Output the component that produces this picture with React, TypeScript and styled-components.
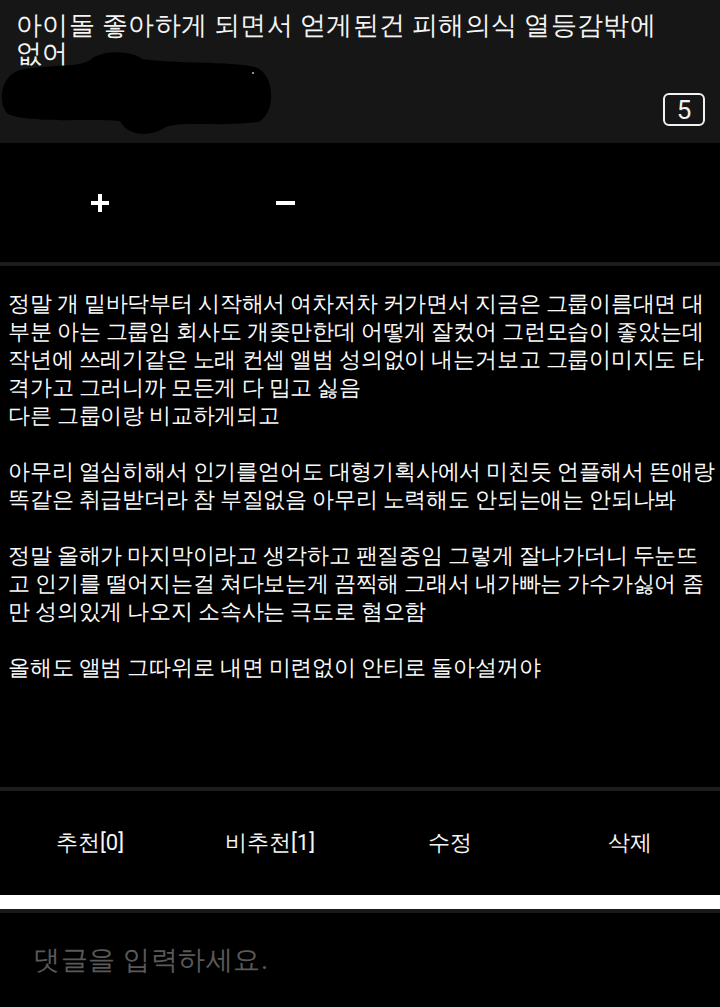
import React from "react";
import styled, { createGlobalStyle } from "styled-components";

const Global = createGlobalStyle`
  html, body { margin: 0; padding: 0; background: #000; }
  body {
    font-family: Roboto, sans-serif;
    color: #fff;
  }
  * { box-sizing: border-box; }
`;

const Page = styled.div`
  width: 720px;
  min-height: 1007px;
  background: #000;
  display: flex;
  flex-direction: column;
  overflow: hidden;
`;

const Header = styled.header`
  position: relative;
  height: 143px;
  background: #161616;
  padding: 11px 15px 0 16px;
  display: flex;
  flex-direction: column;
`;

const Title = styled.h1`
  margin: 0;
  font-family: Roboto, sans-serif;
  font-weight: 400;
  font-size: 26px;
  letter-spacing: 0.35px;
  line-height: 28px;
  color: #f4f4f4;
  white-space: pre;
  position: relative;
  z-index: 0;
`;

const Redaction = styled.svg`
  position: absolute;
  left: 0;
  top: 0;
  z-index: 1;
`;

const MetaRow = styled.div`
  margin-top: 26px;
  display: flex;
  justify-content: flex-end;
`;

const CountBadge = styled.span`
  width: 42px;
  height: 33px;
  border: 2px solid #f2f2f2;
  border-radius: 6px;
  display: flex;
  align-items: center;
  justify-content: center;
  font-size: 26px;
  line-height: 1;
  color: #f2f2f2;
`;

const VoteRow = styled.div`
  height: 119px;
  display: flex;
  align-items: center;
  padding-left: 80px;
  gap: 145px;
`;

const VoteButton = styled.button`
  width: 40px;
  height: 40px;
  background: none;
  border: 0;
  padding: 0;
  display: flex;
  align-items: center;
  justify-content: center;
  cursor: pointer;
`;

const Divider = styled.div<{ $h?: number; $c?: string }>`
  height: ${(p) => p.$h ?? 4}px;
  background: ${(p) => p.$c ?? "#1d1d1d"};
`;

const Body = styled.article`
  height: 521px;
  padding: 24px 0 0 8px;
`;

const Para = styled.p`
  margin: 0 0 28px 0;
  font-family: Roboto, sans-serif;
  font-size: 22px;
  letter-spacing: -0.22px;
  line-height: 28px;
  color: #fafafa;
  white-space: pre;
`;

const ActionBar = styled.nav`
  height: 104px;
  display: grid;
  grid-template-columns: repeat(4, 1fr);
  align-items: center;
`;

const Action = styled.button`
  background: none;
  border: 0;
  color: #f5f5f5;
  font-family: Roboto, sans-serif;
  font-size: 22px;
  padding: 0;
  text-align: center;
`;

const CommentArea = styled.div`
  height: 94px;
  display: flex;
  align-items: center;
  padding-left: 33px;
`;

const CommentInput = styled.input`
  background: transparent;
  border: 0;
  outline: none;
  width: 100%;
  font-family: Roboto, sans-serif;
  font-size: 27px;
  letter-spacing: 0.6px;
  color: #fff;
  padding: 0;
  &::placeholder { color: #595959; }
`;

const paragraphs = [
  [
    "정말 개 밑바닥부터 시작해서 여차저차 커가면서 지금은 그룹이름대면 대",
    "부분 아는 그룹임 회사도 개좆만한데 어떻게 잘컸어 그런모습이 좋았는데",
    "작년에 쓰레기같은 노래 컨셉 앨범 성의없이 내는거보고 그룹이미지도 타",
    "격가고 그러니까 모든게 다 밉고 싫음",
    "다른 그룹이랑 비교하게되고",
  ],
  [
    "아무리 열심히해서 인기를얻어도 대형기획사에서 미친듯 언플해서 뜬애랑",
    "똑같은 취급받더라 참 부질없음 아무리 노력해도 안되는애는 안되나봐",
  ],
  [
    "정말 올해가 마지막이라고 생각하고 팬질중임 그렇게 잘나가더니 두눈뜨",
    "고 인기를 떨어지는걸 쳐다보는게 끔찍해 그래서 내가빠는 가수가싫어 좀",
    "만 성의있게 나오지 소속사는 극도로 혐오함",
  ],
  ["올해도 앨범 그따위로 내면 미련없이 안티로 돌아설꺼야"],
];

export default function App() {
  return (
    <Page>
      <Global />
      <Header>
        <Title>{"아이돌 좋아하게 되면서 얻게된건 피해의식 열등감밖에\n없어"}</Title>
        <Redaction width="280" height="140" viewBox="0 0 280 140">
          <path
            d="M 20 70 C 50 64, 78 68, 90 60 C 102 50, 130 50, 142 59 C 172 64, 230 61, 255 67 C 275 73, 277 113, 258 122 C 222 127, 182 121, 166 127 C 150 138, 128 136, 120 121 C 90 118, 30 124, 8 114 C -2 105, -1 76, 20 70 Z"
            fill="#000"
          />
          <circle cx="253" cy="73" r="1" fill="#bbb" />
        </Redaction>
        <MetaRow>
          <CountBadge>5</CountBadge>
        </MetaRow>
      </Header>
      <VoteRow>
        <VoteButton aria-label="추천">
          <svg width="18" height="18" viewBox="0 0 18 18">
            <rect x="7" y="0" width="4" height="18" fill="#fff" />
            <rect x="0" y="7" width="18" height="4" fill="#fff" />
          </svg>
        </VoteButton>
        <VoteButton aria-label="비추천">
          <svg width="19" height="4" viewBox="0 0 19 4">
            <rect x="0" y="0" width="19" height="4" fill="#fff" />
          </svg>
        </VoteButton>
      </VoteRow>
      <Divider />
      <Body>
        {paragraphs.map((lines, i) => (
          <Para key={i}>{lines.join("\n")}</Para>
        ))}
      </Body>
      <Divider />
      <ActionBar>
        <Action>추천[0]</Action>
        <Action>비추천[1]</Action>
        <Action>수정</Action>
        <Action>삭제</Action>
      </ActionBar>
      <Divider $h={14} $c="#ffffff" />
      <Divider $h={4} $c="#1a1a1a" />
      <CommentArea>
        <CommentInput placeholder="댓글을 입력하세요." />
      </CommentArea>
    </Page>
  );
}
